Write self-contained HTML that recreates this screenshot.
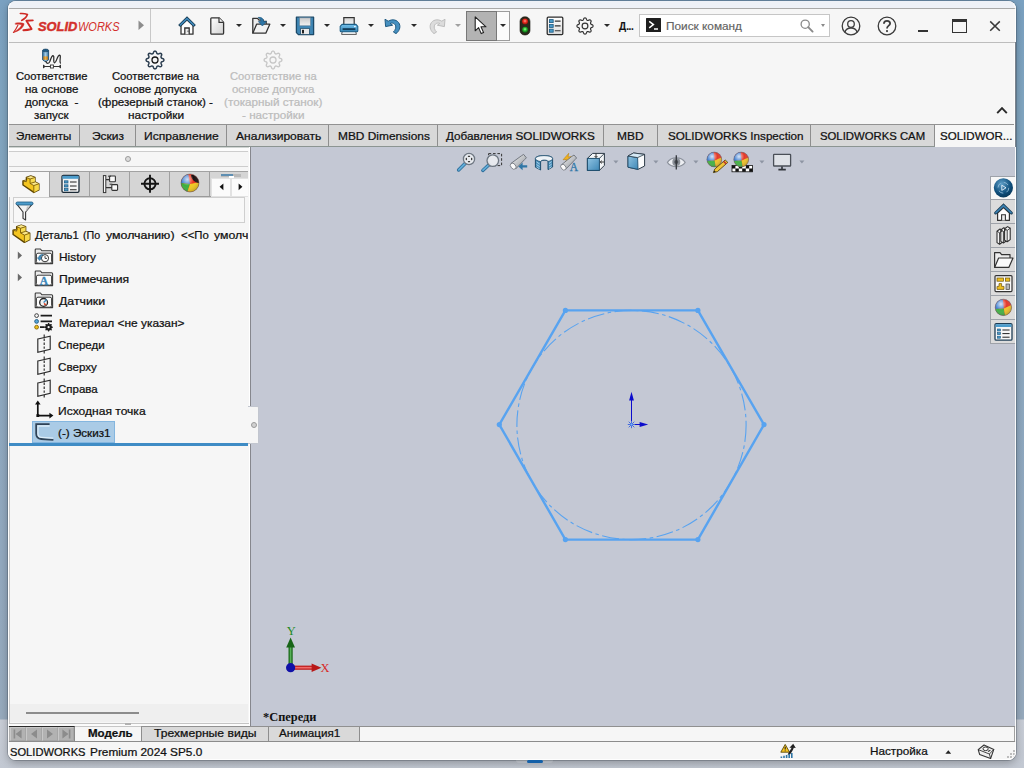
<!DOCTYPE html>
<html lang="ru">
<head>
<meta charset="utf-8">
<title>SOLIDWORKS Premium 2024 SP5.0</title>
<style>
*{box-sizing:border-box;margin:0;padding:0}
html,body{width:1024px;height:768px;overflow:hidden}
body{position:relative;font-family:"Liberation Sans",sans-serif;font-size:12px;color:#111;
 background:linear-gradient(180deg,#7aa1c1 0px,#80a5c0 100px,#8ca8c0 336px,#93a9bf 566px,#97aabd 719px,#c8cdd6 720px,#c2c8d2 768px);}
.abs{position:absolute}
#win{position:absolute;left:8px;top:1px;width:1008px;height:759px;background:#f6f6f6;border-radius:8px;overflow:hidden;
 box-shadow:0 0 0 1px rgba(40,50,60,.26),0 3px 9px rgba(0,0,0,.28)}
#rim{position:absolute;left:8px;top:1px;width:1008px;height:759px;border-radius:8px;border:1px solid rgba(255,255,255,.9);border-top-color:transparent;pointer-events:none}
/* everything inside #win is positioned relative to page coords via inner wrapper */
#in{position:absolute;left:-8px;top:-1px;width:1024px;height:768px}
.hl{position:absolute;height:1px;background:#b4b4b4}
.vl{position:absolute;width:1px;background:#b4b4b4}
.t{position:absolute;white-space:nowrap;line-height:14px;-webkit-text-stroke:.24px currentColor}
/* tabs */
.tab{position:absolute;top:125px;height:21px;background:#d9d9d9;border-right:1px solid #a8a8a8;font-size:12.5px;line-height:21px;white-space:nowrap;text-align:center;color:#111}
.tab.act{background:#f6f6f6;border-right:none}
/* ribbon */
.rb{position:absolute;top:69px;text-align:center;font-size:12px;line-height:13px;white-space:nowrap;color:#111}
.rb.dis{color:#b9b9b9}
/* tree */
.tr{position:absolute;left:58px;font-size:12.5px;line-height:16px;white-space:nowrap;color:#111}
.dd{position:absolute;width:0;height:0;border-left:3px solid transparent;border-right:3px solid transparent;border-top:3.4px solid #2a2a2a}
svg{position:absolute;overflow:visible}
</style>
</head>
<body>
<div id="win"><div id="in">

<!-- top resize strip + title bar -->
<div class="abs" style="left:8px;top:1px;width:1008px;height:7px;background:#eef1f7"></div>
<div class="hl" style="left:8px;top:8px;width:1008px;background:#a9a9a9"></div>
<div class="hl" style="left:8px;top:42px;width:1008px;background:#bdbdbd"></div>
<div class="vl" style="left:150px;top:9px;height:33px;background:#c8c8c8"></div>

<!-- ===== TITLE BAR ===== -->
<!-- DS logo mark -->
<svg style="left:10px;top:10px" width="26" height="26" viewBox="0 0 26 26" fill="none" stroke="#cf2a25" stroke-linecap="round" stroke-linejoin="round">
 <path d="M10.3 3.5 C13 3.3 15.6 3.7 17.5 4.5 C16.6 7 14.4 9.2 11.6 10.5" stroke-width="1.5"/>
 <path d="M5.6 13.1 C9 12.6 12.4 12.8 14.1 13.7 C13.6 17.6 9 21.2 3.4 22.5 C8 19.8 11 17 11.7 14.8 C9.8 14.2 7.6 14.2 5.6 14.3Z" fill="#cf2a25" stroke-width=".5"/>
 <path d="M3.4 22.5 C5 20.6 6.6 18 7.9 15.2" stroke-width="1.1"/>
 <path d="M22.8 10.4 L16.4 10.8 L21.6 19 C18.8 19.8 16 20.2 13.4 20.3" stroke-width="1.9"/>
</svg>
<div class="t" style="left:38.3px;top:19.5px;font-size:12.8px;line-height:14px;color:#d3302b;font-style:italic;font-weight:bold;-webkit-text-stroke:.45px #d3302b;display:inline-block;transform-origin:0 50%;transform:scaleX(1.0049)">SOLID</div>
<div class="t" style="left:78.2px;top:19.5px;font-size:12.8px;line-height:14px;color:#d3302b;font-style:italic;-webkit-text-stroke:0;display:inline-block;transform-origin:0 50%;transform:scaleX(0.8582)">WORKS</div>
<svg style="left:138px;top:20px" width="7" height="11"><path d="M0.5 0.5 L6 5.2 L0.5 10Z" fill="#8c8c8c"/></svg>

<!-- home -->
<svg style="left:177px;top:16px" width="20" height="20" viewBox="0 0 20 20">
 <path d="M4 9.6 V18.2 H16 V9.6 L10 3.8Z" fill="#fdfdfd" stroke="#333" stroke-width="1.3" stroke-linejoin="round"/>
 <path d="M7.8 18.2 V12 H12.2 V18.2" fill="#ececec" stroke="#333" stroke-width="1.3"/>
 <path d="M11 14.6 V15.8" stroke="#333" stroke-width="1"/>
 <path d="M2.2 10 L10 2.4 L17.8 10" fill="none" stroke="#1d3f57" stroke-width="3" stroke-linejoin="miter" stroke-linecap="butt"/>
 <path d="M2.9 9.4 L10 2.5 L17.1 9.4" fill="none" stroke="#3f8abc" stroke-width="1.5" stroke-linejoin="miter" stroke-linecap="butt"/>
</svg>
<!-- new -->
<svg style="left:210px;top:17px" width="15" height="18" viewBox="0 0 15 18">
 <defs><linearGradient id="gdoc" x1="0" y1="0" x2="1" y2="1"><stop offset="0" stop-color="#ffffff"/><stop offset="1" stop-color="#d2d2d2"/></linearGradient></defs>
 <path d="M1.6 0.8 H9 L13.6 5.4 V16 Q13.6 17.2 12.4 17.2 H1.6 Q0.8 17.2 0.8 16 V1.8 Q0.8 0.8 1.6 0.8Z" fill="url(#gdoc)" stroke="#333" stroke-width="1.3" stroke-linejoin="round"/>
 <path d="M9 0.8 V5.4 H13.6" fill="#f4f4f4" stroke="#333" stroke-width="1.2" stroke-linejoin="round"/>
</svg>
<div class="dd" style="left:235.5px;top:24px"></div>
<!-- open -->
<svg style="left:251px;top:16px" width="20" height="19" viewBox="0 0 20 19">
 <path d="M1.8 17.2 V2.4 H6.6 L8.2 4.2 H13" fill="#ededed" stroke="#333" stroke-width="1.3" stroke-linejoin="round"/>
 <path d="M1.8 17.2 L5.6 8.2 H18.8 L14.8 17.2Z" fill="#f2f2f2" stroke="#333" stroke-width="1.3" stroke-linejoin="round"/>
 <path d="M15.2 8 V5.4 H12.2" fill="none" stroke="#333" stroke-width="1.2"/>
 <path d="M7.2 1.4 C10.6 1 12.4 2.6 12.6 5.6 L15.4 5.6 L11.4 10 L7.4 5.6 L10 5.6 C9.8 3.6 9 2.4 7.2 1.4Z" fill="#2f76a6" stroke="#1f5a82" stroke-width=".7"/>
</svg>
<div class="dd" style="left:279.5px;top:24px"></div>
<!-- save -->
<svg style="left:295px;top:16px" width="20" height="20" viewBox="0 0 20 20">
 <defs><linearGradient id="gsv" x1="0" y1="0" x2="0" y2="1"><stop offset="0" stop-color="#c9c9c9"/><stop offset="1" stop-color="#f2f2f2"/></linearGradient></defs>
 <path d="M1.4 1.2 H18.6 V18.6 H3.4 L1.4 16.6Z" fill="#3f86b4" stroke="#1c4a69" stroke-width="1.3" stroke-linejoin="round"/>
 <rect x="4.4" y="1.8" width="11.2" height="8" fill="url(#gsv)" stroke="#5c7e96" stroke-width=".6"/>
 <rect x="5.6" y="12.4" width="8.8" height="6" fill="#e9e9e9" stroke="#28536f" stroke-width=".8"/>
 <rect x="7" y="13.8" width="2" height="3.6" fill="#222"/>
</svg>
<div class="dd" style="left:323.6px;top:24px"></div>
<!-- print -->
<svg style="left:339px;top:16px" width="20" height="20" viewBox="0 0 20 20">
 <defs><linearGradient id="gpr" x1="0" y1="0" x2="0" y2="1"><stop offset="0" stop-color="#d2d2d2"/><stop offset="1" stop-color="#fafafa"/></linearGradient>
 <linearGradient id="gpb" x1="0" y1="0" x2="0" y2="1"><stop offset="0" stop-color="#74c0ea"/><stop offset="1" stop-color="#3586b8"/></linearGradient></defs>
 <rect x="4.8" y="1.6" width="10.4" height="7.6" fill="url(#gpr)" stroke="#333" stroke-width="1.2"/>
 <path d="M3.4 15 H16.6 L17.4 18.4 H2.6Z" fill="#fbfbfb" stroke="#555" stroke-width="1" stroke-linejoin="round"/>
 <path d="M3 8.4 H17 L18.8 10.4 V14.8 Q18.8 15.8 17.8 15.8 H2.2 Q1.2 15.8 1.2 14.8 V10.4Z" fill="url(#gpb)" stroke="#1d5f87" stroke-width="1.1" stroke-linejoin="round"/>
 <rect x="3.6" y="12.2" width="12.8" height="1.9" fill="#123c58"/>
 <rect x="15" y="10" width="1.8" height="1.1" fill="#e8f4ff"/>
</svg>
<div class="dd" style="left:367.5px;top:24px"></div>
<!-- undo -->
<svg style="left:384px;top:17px" width="18" height="18" viewBox="0 0 18 18">
 <path d="M1 2.2 L1.6 9.6 L8.6 8.2 L6.2 6.4 C9.6 5.2 12.6 7.6 11.6 11.4 C11.2 13 10.4 14.2 9.4 15 L12 16.6 C15 14.4 16.8 10.6 15.4 7 C13.6 2.8 8.6 1.6 4.2 4.2Z" fill="#4690c0" stroke="#1f5a82" stroke-width="1" stroke-linejoin="round"/>
</svg>
<div class="dd" style="left:411.4px;top:24px"></div>
<!-- redo (disabled) -->
<svg style="left:428px;top:17px" width="18" height="18" viewBox="0 0 18 18">
 <path d="M17 2.2 L16.4 9.6 L9.4 8.2 L11.8 6.4 C8.4 5.2 5.4 7.6 6.4 11.4 C6.8 13 7.6 14.2 8.6 15 L6 16.6 C3 14.4 1.2 10.6 2.6 7 C4.4 2.8 9.4 1.6 13.8 4.2Z" fill="#dcdcdc" stroke="#bdbdbd" stroke-width="1" stroke-linejoin="round"/>
</svg>
<div class="dd" style="left:455.3px;top:24px;border-top-color:#a0a0a0"></div>
<!-- select button -->
<div class="abs" style="left:466px;top:11px;width:44px;height:30px;background:#fbfbfb;border:1px solid #9c9c9c"></div>
<div class="abs" style="left:466px;top:11px;width:31px;height:30px;background:#b3b3b3;border:1px solid #787878"></div>
<svg style="left:474px;top:16px" width="14" height="19" viewBox="0 0 14 19">
 <path d="M1.2 0.9 V14.8 L4.6 11.6 L7.2 17.6 L9.6 16.6 L7 10.8 H12Z" fill="#fff" stroke="#222" stroke-width="1.1" stroke-linejoin="round"/>
</svg>
<div class="dd" style="left:499.5px;top:24px"></div>
<!-- traffic light -->
<svg style="left:519px;top:16px" width="12" height="20" viewBox="0 0 12 20">
 <defs><radialGradient id="gr1" cx=".5" cy=".4" r=".6"><stop offset="0" stop-color="#ff9a8a"/><stop offset=".5" stop-color="#e8281c"/><stop offset="1" stop-color="#8c120a"/></radialGradient>
 <radialGradient id="gg1" cx=".5" cy=".4" r=".6"><stop offset="0" stop-color="#9dff9a"/><stop offset=".5" stop-color="#22b02a"/><stop offset="1" stop-color="#0b5a12"/></radialGradient></defs>
 <rect x="1" y="0.8" width="10" height="18.2" rx="4.6" fill="#2b2a1c" stroke="#1a1a10" stroke-width=".6"/>
 <circle cx="6" cy="5.6" r="3" fill="url(#gr1)"/>
 <circle cx="6" cy="13.8" r="3" fill="url(#gg1)"/>
</svg>
<!-- options list -->
<svg style="left:546px;top:16px" width="18" height="20" viewBox="0 0 18 20">
 <defs><linearGradient id="gol" x1="0" y1="0" x2="0" y2="1"><stop offset="0" stop-color="#ffffff"/><stop offset="1" stop-color="#dcdcdc"/></linearGradient></defs>
 <rect x="1.2" y="1.2" width="15.6" height="17.4" rx="1" fill="url(#gol)" stroke="#2d2d2d" stroke-width="1.3"/>
 <g fill="#4a9ac8" stroke="#1d5a82" stroke-width=".8"><rect x="3.4" y="3.6" width="3.8" height="3"/><rect x="3.4" y="8.4" width="3.8" height="3"/><rect x="3.4" y="13.2" width="3.8" height="3"/></g>
 <g stroke="#333" stroke-width="1.1"><path d="M8.8 5.1 H14.6 M8.8 9.9 H14.6 M8.8 14.7 H14.6"/></g>
</svg>
<!-- gear -->
<svg style="left:585px;top:25.6px" width="1" height="1"><path d="M0.00 -8.10 L0.52 -8.01 L1.02 -7.72 L1.39 -6.96 L1.66 -6.20 L1.99 -5.85 L2.33 -5.64 L2.73 -5.54 L3.21 -5.56 L3.94 -5.90 L4.74 -6.17 L5.29 -6.03 L5.73 -5.73 L6.03 -5.29 L6.17 -4.74 L5.90 -3.94 L5.56 -3.21 L5.54 -2.73 L5.64 -2.33 L5.85 -1.99 L6.20 -1.66 L6.96 -1.39 L7.72 -1.02 L8.01 -0.52 L8.10 0.00 L8.01 0.52 L7.72 1.02 L6.96 1.39 L6.20 1.66 L5.85 1.99 L5.64 2.33 L5.54 2.73 L5.56 3.21 L5.90 3.94 L6.17 4.74 L6.03 5.29 L5.73 5.73 L5.29 6.03 L4.74 6.17 L3.94 5.90 L3.21 5.56 L2.73 5.54 L2.33 5.64 L1.99 5.85 L1.66 6.20 L1.39 6.96 L1.02 7.72 L0.52 8.01 L0.00 8.10 L-0.52 8.01 L-1.02 7.72 L-1.39 6.96 L-1.66 6.20 L-1.99 5.85 L-2.33 5.64 L-2.73 5.54 L-3.21 5.56 L-3.94 5.90 L-4.74 6.17 L-5.29 6.03 L-5.73 5.73 L-6.03 5.29 L-6.17 4.74 L-5.90 3.94 L-5.56 3.21 L-5.54 2.73 L-5.64 2.33 L-5.85 1.99 L-6.20 1.66 L-6.96 1.39 L-7.72 1.02 L-8.01 0.52 L-8.10 0.00 L-8.01 -0.52 L-7.72 -1.02 L-6.96 -1.39 L-6.20 -1.66 L-5.85 -1.99 L-5.64 -2.33 L-5.54 -2.73 L-5.56 -3.21 L-5.90 -3.94 L-6.17 -4.74 L-6.03 -5.29 L-5.73 -5.73 L-5.29 -6.03 L-4.74 -6.17 L-3.94 -5.90 L-3.21 -5.56 L-2.73 -5.54 L-2.33 -5.64 L-1.99 -5.85 L-1.66 -6.20 L-1.39 -6.96 L-1.02 -7.72 L-0.52 -8.01Z" fill="none" stroke="#333" stroke-width="1.15" stroke-linejoin="round"/><circle r="2.9" fill="none" stroke="#333" stroke-width="1.15"/></svg>
<div class="dd" style="left:603.5px;top:24px"></div>
<div class="t" style="left:619.2px;top:18.6px;font-size:10.4px;font-weight:bold;line-height:15px;color:#111;-webkit-text-stroke:.1px #111;display:inline-block;transform-origin:0 50%;transform:scaleX(0.9623)">Д<span style="letter-spacing:-.3px">...</span></div>

<!-- search box -->
<div class="abs" style="left:639px;top:14px;width:191px;height:23px;background:#fff;border:1px solid #c6c6c6"></div>
<svg style="left:646px;top:18px" width="15" height="14" viewBox="0 0 15 14"><rect width="15" height="14" rx=".6" fill="#1e1e1e"/><path d="M3.2 3.4 L7.4 6.6 L3.2 9.8" fill="none" stroke="#fff" stroke-width="1.5"/><path d="M8 11 H12" stroke="#fff" stroke-width="1.4"/></svg>
<div class="t" style="left:666px;top:18.6px;font-size:10.5px;line-height:15px;color:#636363;-webkit-text-stroke:.15px #636363;display:inline-block;transform-origin:0 50%;transform:scaleX(1.1249)">Поиск команд</div>
<svg style="left:800px;top:19px" width="14" height="14" viewBox="0 0 14 14"><circle cx="5.2" cy="5.2" r="4.1" fill="none" stroke="#8a8a8a" stroke-width="1.3"/><path d="M8.2 8.2 L12.6 12.6" stroke="#8a8a8a" stroke-width="1.9" stroke-linecap="round"/></svg>
<div class="dd" style="left:821px;top:24px;border-left-width:2.5px;border-right-width:2.5px;border-top-width:3px;border-top-color:#8a8a8a"></div>
<!-- user -->
<svg style="left:841px;top:16px" width="20" height="20" viewBox="0 0 20 20" fill="none" stroke="#3c3c3c" stroke-width="1.3">
 <circle cx="10" cy="10" r="8.8"/><circle cx="10" cy="8" r="3.3"/><path d="M4 16.2 C4.8 12.6 7.4 12 10 12 C12.6 12 15.2 12.6 16 16.2"/>
</svg>
<!-- help -->
<svg style="left:877px;top:16px" width="20" height="20" viewBox="0 0 20 20" fill="none" stroke="#3c3c3c">
 <circle cx="10" cy="10" r="8.8" stroke-width="1.3"/>
 <path d="M6.9 7.8 C6.9 5.6 8.4 4.8 10 4.8 C11.8 4.8 13.1 5.8 13.1 7.5 C13.1 9.6 10 9.8 10 12.4" stroke-width="1.8"/><circle cx="10" cy="15.1" r="1.1" fill="#3c3c3c" stroke="none"/>
</svg>
<!-- window buttons -->
<div class="abs" style="left:918px;top:30px;width:10px;height:2px;background:#333"></div>
<div class="abs" style="left:952px;top:19px;width:15px;height:14px;border:1.4px solid #333;border-top-width:3px"></div>
<svg style="left:989px;top:20px" width="12" height="12" viewBox="0 0 12 12"><path d="M1.2 1.4 L10.8 10.8 M10.8 1.4 L1.2 10.8" stroke="#3a3a3a" stroke-width="1.5"/></svg>
<!-- ===== RIBBON ===== -->
<svg style="left:40px;top:47px" width="24" height="24" viewBox="0 0 24 24">
 <defs><linearGradient id="gcy" x1="0" y1="0" x2="1" y2="0"><stop offset="0" stop-color="#2f6f9c"/><stop offset=".5" stop-color="#a6cde6"/><stop offset="1" stop-color="#2f6f9c"/></linearGradient>
 <linearGradient id="gcy2" x1="0" y1="0" x2="1" y2="0"><stop offset="0" stop-color="#b87512"/><stop offset=".5" stop-color="#efb04a"/><stop offset="1" stop-color="#b87512"/></linearGradient></defs>
 <path d="M2.6 3.6 V12.8 L4.8 14.4 H6.4 L8.6 12.8 V3.6Z" fill="url(#gcy)" stroke="#1d4f74" stroke-width=".9"/>
 <rect x="3.3" y="9.4" width="4.6" height="3.4" fill="url(#gcy2)"/>
 <ellipse cx="5.6" cy="3.4" rx="3" ry="1.4" fill="#1f5a85" stroke="#173f5c" stroke-width=".6"/>
 <path d="M5.8 14.4 C6.4 17 9 16.8 9.8 14.6 C10.8 12 11.4 8.8 13 8.6 C14.8 8.6 12.8 15.2 14.4 15.8 C16.2 16.2 17.2 8.8 19.4 8.2 C21.6 8 19 14.8 20.4 16" fill="none" stroke="#2b2b2b" stroke-width="1.25" stroke-linecap="round"/>
 <path d="M4.4 19.5 H19.6" stroke="#333" stroke-width="1.1"/>
 <path d="M3 17.4 L6 19.5 L3 21.6Z M21 17.4 L18 19.5 L21 21.6Z" fill="#333"/>
 <rect x="10.4" y="18" width="3" height="3" fill="#fff" stroke="#333" stroke-width=".9"/>
</svg>
<div class="t" style="left:16.2px;top:69px;font-size:11.3px;color:#111;display:inline-block;transform-origin:0 50%;transform:scaleX(0.9930)">Соответствие</div>
<div class="t" style="left:25.4px;top:82px;font-size:11.3px;color:#111;display:inline-block;transform-origin:0 50%;transform:scaleX(1.0214)">на основе</div>
<div class="t" style="left:24.8px;top:95px;font-size:11.3px;color:#111;display:inline-block;transform-origin:0 50%;transform:scaleX(1.0351)">допуска &nbsp;-</div>
<div class="t" style="left:34.3px;top:108px;font-size:11.3px;color:#111;display:inline-block;transform-origin:0 50%;transform:scaleX(1.0266)">запуск</div>
<svg style="left:155.4px;top:59.9px" width="1" height="1"><path d="M0.00 -8.90 L0.58 -8.79 L1.11 -8.46 L1.51 -7.60 L1.80 -6.73 L2.15 -6.33 L2.53 -6.10 L2.96 -6.00 L3.48 -6.03 L4.31 -6.44 L5.20 -6.77 L5.81 -6.63 L6.29 -6.29 L6.63 -5.81 L6.77 -5.20 L6.44 -4.31 L6.03 -3.48 L6.00 -2.96 L6.10 -2.53 L6.33 -2.15 L6.73 -1.80 L7.60 -1.51 L8.46 -1.11 L8.79 -0.58 L8.90 0.00 L8.79 0.58 L8.46 1.11 L7.60 1.51 L6.73 1.80 L6.33 2.15 L6.10 2.53 L6.00 2.96 L6.03 3.48 L6.44 4.31 L6.77 5.20 L6.63 5.81 L6.29 6.29 L5.81 6.63 L5.20 6.77 L4.31 6.44 L3.48 6.03 L2.96 6.00 L2.53 6.10 L2.15 6.33 L1.80 6.73 L1.51 7.60 L1.11 8.46 L0.58 8.79 L0.00 8.90 L-0.58 8.79 L-1.11 8.46 L-1.51 7.60 L-1.80 6.73 L-2.15 6.33 L-2.53 6.10 L-2.96 6.00 L-3.48 6.03 L-4.31 6.44 L-5.20 6.77 L-5.81 6.63 L-6.29 6.29 L-6.63 5.81 L-6.77 5.20 L-6.44 4.31 L-6.03 3.48 L-6.00 2.96 L-6.10 2.53 L-6.33 2.15 L-6.73 1.80 L-7.60 1.51 L-8.46 1.11 L-8.79 0.58 L-8.90 0.00 L-8.79 -0.58 L-8.46 -1.11 L-7.60 -1.51 L-6.73 -1.80 L-6.33 -2.15 L-6.10 -2.53 L-6.00 -2.96 L-6.03 -3.48 L-6.44 -4.31 L-6.77 -5.20 L-6.63 -5.81 L-6.29 -6.29 L-5.81 -6.63 L-5.20 -6.77 L-4.31 -6.44 L-3.48 -6.03 L-2.96 -6.00 L-2.53 -6.10 L-2.15 -6.33 L-1.80 -6.73 L-1.51 -7.60 L-1.11 -8.46 L-0.58 -8.79Z" fill="none" stroke="#2c3e50" stroke-width="1.45" stroke-linejoin="round"/><circle r="3.0" fill="none" stroke="#151515" stroke-width="1.3"/></svg>
<div class="t" style="left:111.6px;top:69px;font-size:11.3px;color:#111;display:inline-block;transform-origin:0 50%;transform:scaleX(0.9947)">Соответствие на</div>
<div class="t" style="left:113.6px;top:82px;font-size:11.3px;color:#111;display:inline-block;transform-origin:0 50%;transform:scaleX(1.0161)">основе допуска</div>
<div class="t" style="left:98.2px;top:95px;font-size:11.3px;color:#111;display:inline-block;transform-origin:0 50%;transform:scaleX(1.0268)">(фрезерный станок) -</div>
<div class="t" style="left:127.6px;top:108px;font-size:11.3px;color:#111;display:inline-block;transform-origin:0 50%;transform:scaleX(1.0508)">настройки</div>
<svg style="left:273.2px;top:59.9px" width="1" height="1"><path d="M0.00 -8.90 L0.58 -8.79 L1.11 -8.46 L1.51 -7.60 L1.80 -6.73 L2.15 -6.33 L2.53 -6.10 L2.96 -6.00 L3.48 -6.03 L4.31 -6.44 L5.20 -6.77 L5.81 -6.63 L6.29 -6.29 L6.63 -5.81 L6.77 -5.20 L6.44 -4.31 L6.03 -3.48 L6.00 -2.96 L6.10 -2.53 L6.33 -2.15 L6.73 -1.80 L7.60 -1.51 L8.46 -1.11 L8.79 -0.58 L8.90 0.00 L8.79 0.58 L8.46 1.11 L7.60 1.51 L6.73 1.80 L6.33 2.15 L6.10 2.53 L6.00 2.96 L6.03 3.48 L6.44 4.31 L6.77 5.20 L6.63 5.81 L6.29 6.29 L5.81 6.63 L5.20 6.77 L4.31 6.44 L3.48 6.03 L2.96 6.00 L2.53 6.10 L2.15 6.33 L1.80 6.73 L1.51 7.60 L1.11 8.46 L0.58 8.79 L0.00 8.90 L-0.58 8.79 L-1.11 8.46 L-1.51 7.60 L-1.80 6.73 L-2.15 6.33 L-2.53 6.10 L-2.96 6.00 L-3.48 6.03 L-4.31 6.44 L-5.20 6.77 L-5.81 6.63 L-6.29 6.29 L-6.63 5.81 L-6.77 5.20 L-6.44 4.31 L-6.03 3.48 L-6.00 2.96 L-6.10 2.53 L-6.33 2.15 L-6.73 1.80 L-7.60 1.51 L-8.46 1.11 L-8.79 0.58 L-8.90 0.00 L-8.79 -0.58 L-8.46 -1.11 L-7.60 -1.51 L-6.73 -1.80 L-6.33 -2.15 L-6.10 -2.53 L-6.00 -2.96 L-6.03 -3.48 L-6.44 -4.31 L-6.77 -5.20 L-6.63 -5.81 L-6.29 -6.29 L-5.81 -6.63 L-5.20 -6.77 L-4.31 -6.44 L-3.48 -6.03 L-2.96 -6.00 L-2.53 -6.10 L-2.15 -6.33 L-1.80 -6.73 L-1.51 -7.60 L-1.11 -8.46 L-0.58 -8.79Z" fill="none" stroke="#c6c6c6" stroke-width="1.3" stroke-linejoin="round"/><circle r="3.0" fill="none" stroke="#c6c6c6" stroke-width="1.3"/></svg>
<div class="t" style="left:229.5px;top:69px;font-size:11.3px;color:#bcbcbc;display:inline-block;transform-origin:0 50%;transform:scaleX(0.9901)">Соответствие на</div>
<div class="t" style="left:231.8px;top:82px;font-size:11.3px;color:#bcbcbc;display:inline-block;transform-origin:0 50%;transform:scaleX(1.0136)">основе допуска</div>
<div class="t" style="left:223.6px;top:95px;font-size:11.3px;color:#bcbcbc;display:inline-block;transform-origin:0 50%;transform:scaleX(1.0372)">(токарный станок)</div>
<div class="t" style="left:242.0px;top:108px;font-size:11.3px;color:#bcbcbc;display:inline-block;transform-origin:0 50%;transform:scaleX(1.0352)">- настройки</div>
<svg style="left:996px;top:106px" width="12" height="9" viewBox="0 0 12 9"><path d="M1.2 7.2 L6 2.2 L10.8 7.2" fill="none" stroke="#2a2a2a" stroke-width="1.9"/></svg>
<!-- ===== TABS ===== -->
<div class="abs" style="left:8px;top:124px;width:1008px;height:23px;background:#d8d8d8;border-top:1px solid #929292;border-bottom:1px solid #8c9592"></div>
<div class="abs" style="left:935px;top:125px;width:81px;height:22px;background:#f6f6f6"></div>
<div class="vl" style="left:79px;top:125px;height:21px;background:#8e8e8e"></div>
<div class="vl" style="left:135px;top:125px;height:21px;background:#8e8e8e"></div>
<div class="vl" style="left:226px;top:125px;height:21px;background:#8e8e8e"></div>
<div class="vl" style="left:328px;top:125px;height:21px;background:#8e8e8e"></div>
<div class="vl" style="left:437px;top:125px;height:21px;background:#8e8e8e"></div>
<div class="vl" style="left:603px;top:125px;height:21px;background:#8e8e8e"></div>
<div class="vl" style="left:657px;top:125px;height:21px;background:#8e8e8e"></div>
<div class="vl" style="left:810px;top:125px;height:21px;background:#8e8e8e"></div>
<div class="vl" style="left:934px;top:125px;height:21px;background:#8e8e8e"></div>
<div class="t" style="left:16.0px;top:129px;font-size:11.3px;line-height:15px;color:#111;display:inline-block;transform-origin:0 50%;transform:scaleX(1.0202)">Элементы</div>
<div class="t" style="left:92.0px;top:129px;font-size:11.3px;line-height:15px;color:#111;display:inline-block;transform-origin:0 50%;transform:scaleX(1.0595)">Эскиз</div>
<div class="t" style="left:144.2px;top:129px;font-size:11.3px;line-height:15px;color:#111;display:inline-block;transform-origin:0 50%;transform:scaleX(1.0700)">Исправление</div>
<div class="t" style="left:235.7px;top:129px;font-size:11.3px;line-height:15px;color:#111;display:inline-block;transform-origin:0 50%;transform:scaleX(1.0665)">Анализировать</div>
<div class="t" style="left:337.8px;top:129px;font-size:11.3px;line-height:15px;color:#111;display:inline-block;transform-origin:0 50%;transform:scaleX(1.0531)">MBD Dimensions</div>
<div class="t" style="left:445.7px;top:129px;font-size:11.3px;line-height:15px;color:#111;display:inline-block;transform-origin:0 50%;transform:scaleX(1.0372)">Добавления SOLIDWORKS</div>
<div class="t" style="left:617.4px;top:129px;font-size:11.3px;line-height:15px;color:#111;display:inline-block;transform-origin:0 50%;transform:scaleX(1.0594)">MBD</div>
<div class="t" style="left:667.5px;top:129px;font-size:11.3px;line-height:15px;color:#111;display:inline-block;transform-origin:0 50%;transform:scaleX(1.0326)">SOLIDWORKS Inspection</div>
<div class="t" style="left:819.5px;top:129px;font-size:11.3px;line-height:15px;color:#111;display:inline-block;transform-origin:0 50%;transform:scaleX(1.0026)">SOLIDWORKS CAM</div>
<div class="t" style="left:939.5px;top:129px;font-size:11.3px;line-height:15px;color:#111;display:inline-block;transform-origin:0 50%;transform:scaleX(1.0220)">SOLIDWOR...</div>
<!-- ===== LEFT PANEL ===== -->
<div class="abs" style="left:8px;top:147px;width:241px;height:4px;background:#fcfcfc"></div>
<div class="hl" style="left:8px;top:147px;width:1008px;background:#cfd4d2"></div>
<div class="hl" style="left:8px;top:151px;width:240px;background:#cdcdcd"></div>
<div class="hl" style="left:8px;top:166px;width:240px;background:#cdcdcd"></div>
<div class="abs" style="left:125px;top:156px;width:6px;height:6px;border-radius:50%;background:#dcdcdc;border:1px solid #9c9c9c"></div>
<!-- fm tabs -->
<div class="abs" style="left:10px;top:171px;width:238px;height:26px;background:#d5d5d5;border-top:1px solid #a2a2a2;border-bottom:1px solid #9a9a9a"></div>
<div class="abs" style="left:10px;top:172px;width:39px;height:25px;background:#f6f6f6"></div>
<div class="vl" style="left:49px;top:172px;height:24px;background:#a0a0a0"></div>
<div class="vl" style="left:89px;top:172px;height:24px;background:#a0a0a0"></div>
<div class="vl" style="left:129px;top:172px;height:24px;background:#a0a0a0"></div>
<div class="vl" style="left:169px;top:172px;height:24px;background:#a0a0a0"></div>
<div class="vl" style="left:209px;top:172px;height:24px;background:#a0a0a0"></div>
<!-- partial 6th tab icon -->
<div class="abs" style="left:221px;top:174px;width:20px;height:3px;background:#b9b9b9"></div>
<div class="abs" style="left:221px;top:174px;width:12px;height:2px;background:#5f8fb2"></div>
<div class="abs" style="left:229px;top:176px;width:5px;height:2px;background:#fff"></div>
<!-- scroll buttons -->
<div class="abs" style="left:211px;top:178px;width:20px;height:19px;background:#fbfbfb;border:1px solid #e2e2e2"></div>
<div class="abs" style="left:231px;top:178px;width:17px;height:19px;background:#fbfbfb;border:1px solid #e2e2e2;border-right:none"></div>
<svg style="left:219px;top:183px" width="5" height="8"><path d="M4.4 0.4 V7.2 L0.6 3.8Z" fill="#111"/></svg>
<svg style="left:238px;top:183px" width="5" height="8"><path d="M0.6 0.4 V7.2 L4.4 3.8Z" fill="#111"/></svg>

<!-- part icon (tab) -->
<svg style="left:19.7px;top:172.7px" width="23" height="23" viewBox="0 0 24 24" stroke-linejoin="round">
 <path d="M3.1 12.5 L14.4 20.3 L19.7 17.5 V11.25 L15.6 9.4 V4.7 L11.25 3.1 L6.7 4.7 V7.5 L3.1 8.3Z" fill="#f4c520" stroke="#5e4604" stroke-width="1.5"/>
 <path d="M6.7 4.7 L10.5 6.25 L15.6 4.7 L11.25 3.1Z" fill="#fbe88c"/>
 <path d="M10.5 6.25 L15.6 4.7 V9.4 L10.5 10.9Z" fill="#f8dc52"/>
 <path d="M10.5 10.9 L14.4 13.1 L19.7 11.25 L15.6 9.4Z" fill="#fbe88c"/>
 <path d="M14.4 13.1 L19.7 11.25 V17.5 L14.4 20.3Z" fill="#f7d848"/>
 <path d="M3.1 8.3 L6.7 9.1 V7.5Z" fill="#fbe88c"/>
 <path d="M6.7 4.7 L10.5 6.25 L15.6 4.7 M10.5 6.25 V10.9 L14.4 13.1 L19.7 11.25 M14.4 13.1 V20.3 M10.5 10.9 L15.6 9.4 M3.1 8.3 L6.7 9.1 V7.5" fill="none" stroke="#7a5c06" stroke-width=".9"/>
</svg>
<!-- property manager icon -->
<svg style="left:61px;top:174px" width="19" height="20" viewBox="0 0 19 20">
 <rect x="1" y="1.4" width="17" height="17" rx="1.4" fill="#f4f4f4" stroke="#1c2a36" stroke-width="1.3"/>
 <rect x="1.4" y="1.8" width="16.2" height="3" fill="#4c9ccb"/>
 <g fill="#4a98c6" stroke="#1d5a82" stroke-width=".7"><rect x="3.4" y="6.8" width="3.6" height="2.2"/><rect x="3.4" y="10.8" width="3.6" height="2.2"/><rect x="3.4" y="14.6" width="3.6" height="2.2"/></g>
 <path d="M9 8 H15.6 M9 12 H15.6 M9 15.8 H15.6" stroke="#222" stroke-width="1.1"/>
</svg>
<!-- config manager icon -->
<svg style="left:102px;top:174px" width="17" height="20" viewBox="0 0 17 20">
 <rect x="1.4" y="1.6" width="2.4" height="17" fill="#fafafa" stroke="#333" stroke-width="1"/>
 <path d="M4 5.6 H8 M4 13.6 H10" stroke="#333" stroke-width="1.2"/>
 <rect x="7.6" y="2" width="5.8" height="5.8" rx=".8" fill="#fafafa" stroke="#333" stroke-width="1.1"/>
 <rect x="9.8" y="10.6" width="5.8" height="5.8" rx=".8" fill="#fafafa" stroke="#333" stroke-width="1.1"/>
 <path d="M6 2.2 H9 M7.6 10.2 H10.4" stroke="#333" stroke-width="1"/>
</svg>
<!-- dimxpert crosshair -->
<svg style="left:140px;top:174px" width="20" height="20" viewBox="0 0 20 20" fill="none" stroke="#151515">
 <circle cx="10" cy="9.8" r="5.6" stroke-width="1.9"/><path d="M10 0.8 V18.8 M1 9.8 H19" stroke-width="1.9"/>
</svg>
<!-- display manager ball -->
<svg style="left:180px;top:173px" width="20" height="20" viewBox="0 0 20 20">
 <defs><radialGradient id="gb1" cx=".35" cy=".3" r=".8"><stop offset="0" stop-color="#fff" stop-opacity=".75"/><stop offset=".45" stop-color="#fff" stop-opacity="0"/><stop offset="1" stop-color="#000" stop-opacity=".25"/></radialGradient><clipPath id="cb1"><circle cx="10" cy="10" r="9"/></clipPath></defs>
 <g clip-path="url(#cb1)"><rect width="20" height="20" fill="#e8321e"/><path d="M0 0 H8 L10 11 L0 10Z" fill="#3a7bd0"/><path d="M0 10 L10 11 L7 20 H0Z" fill="#3cae3c"/><path d="M10 11 L20 9 V20 H7Z" fill="#f2c81e"/><path d="M11 2 C15 1 19 5 19 10 C15 10 11 6 11 2Z" fill="#1a1010"/></g>
 <circle cx="10" cy="10" r="9" fill="url(#gb1)" stroke="#555" stroke-width=".5"/>
</svg>

<!-- filter box -->
<div class="abs" style="left:13px;top:197px;width:232px;height:26px;background:#f8f8f8;border:1px solid #cfcfcf"></div>
<svg style="left:15px;top:201px" width="19" height="20" viewBox="0 0 19 20">
 <path d="M1.4 2.6 L8 11 V17.4 L10.6 19 V11 L17.6 2.6Z" fill="#f2f2f2" stroke="#333" stroke-width="1.1" stroke-linejoin="round"/>
 <path d="M10.6 11 L15 5.6 L12 5.6Z" fill="#bdbdbd"/>
 <rect x="1" y="1" width="17" height="3" rx="1.4" fill="#4c9ccb" stroke="#1f5a82" stroke-width=".8"/>
</svg>
<div class="vl" style="left:9px;top:197px;height:526px;background:#c9c9c9"></div>

<!-- tree root -->
<svg style="left:10.0px;top:222.0px" width="24" height="24" viewBox="0 0 24 24" stroke-linejoin="round">
 <path d="M3.1 12.5 L14.4 20.3 L19.7 17.5 V11.25 L15.6 9.4 V4.7 L11.25 3.1 L6.7 4.7 V7.5 L3.1 8.3Z" fill="#f4c520" stroke="#5e4604" stroke-width="1.5"/>
 <path d="M6.7 4.7 L10.5 6.25 L15.6 4.7 L11.25 3.1Z" fill="#fbe88c"/>
 <path d="M10.5 6.25 L15.6 4.7 V9.4 L10.5 10.9Z" fill="#f8dc52"/>
 <path d="M10.5 10.9 L14.4 13.1 L19.7 11.25 L15.6 9.4Z" fill="#fbe88c"/>
 <path d="M14.4 13.1 L19.7 11.25 V17.5 L14.4 20.3Z" fill="#f7d848"/>
 <path d="M3.1 8.3 L6.7 9.1 V7.5Z" fill="#fbe88c"/>
 <path d="M6.7 4.7 L10.5 6.25 L15.6 4.7 M10.5 6.25 V10.9 L14.4 13.1 L19.7 11.25 M14.4 13.1 V20.3 M10.5 10.9 L15.6 9.4 M3.1 8.3 L6.7 9.1 V7.5" fill="none" stroke="#7a5c06" stroke-width=".9"/>
</svg>
<div class="abs" style="left:34px;top:226px;width:214px;height:18px;overflow:hidden"><div class="t" style="left:0;top:1px;font-size:11.3px;line-height:16px"><span style="position:absolute;left:0.8px;top:0;display:inline-block;transform-origin:0 50%;transform:scaleX(1.0033)">Деталь1</span> <span style="position:absolute;left:49.2px;top:0;display:inline-block;transform-origin:0 50%;transform:scaleX(0.9465)">(По</span> <span style="position:absolute;left:71.9px;top:0;display:inline-block;transform-origin:0 50%;transform:scaleX(1.0938)">умолчанию)</span> <span style="position:absolute;left:146.5px;top:0;display:inline-block;transform-origin:0 50%;transform:scaleX(1.0069)">&lt;&lt;По</span> <span style="position:absolute;left:179.8px;top:0;display:inline-block;transform-origin:0 50%;transform:scaleX(1.0867)">умолч</span></div></div>

<!-- expand arrows -->
<svg style="left:17px;top:251px" width="6" height="9"><path d="M0.8 0.6 L5 4.4 L0.8 8.2Z" fill="#6a6a6a"/></svg>
<svg style="left:17px;top:273px" width="6" height="9"><path d="M0.8 0.6 L5 4.4 L0.8 8.2Z" fill="#6a6a6a"/></svg>

<!-- folder: history -->
<svg style="left:34px;top:248px" width="20" height="17" viewBox="0 0 20 17">
 <path d="M1.2 15.6 V1.8 Q1.2 1 2 1 H6.4 L8 2.8 H17.6 Q18.6 2.8 18.6 3.8 V15.6Z" fill="#ececec" stroke="#3a3a3a" stroke-width="1.1" stroke-linejoin="round"/>
 <rect x="2.4" y="5.2" width="15.2" height="10" rx="1.6" fill="#fdfdfd" stroke="#3a3a3a" stroke-width="1"/>
 <circle cx="11" cy="10.2" r="3.6" fill="#fff" stroke="#333" stroke-width="1"/><path d="M11 8 V10.4 H13" fill="none" stroke="#333" stroke-width=".9"/>
 <path d="M3.4 9.8 L5.6 12.6 L7.8 9.8 H6.6 C6.8 8 8 7 9.4 6.8 C7 6 4.8 7.4 4.6 9.8Z" fill="#3f8dc0" stroke="#1f5a82" stroke-width=".5"/>
</svg>
<!-- folder: annotations -->
<svg style="left:34px;top:270px" width="20" height="17" viewBox="0 0 20 17">
 <path d="M1.2 15.6 V1.8 Q1.2 1 2 1 H6.4 L8 2.8 H17.6 Q18.6 2.8 18.6 3.8 V15.6Z" fill="#ececec" stroke="#3a3a3a" stroke-width="1.1" stroke-linejoin="round"/>
 <rect x="2.4" y="5.2" width="15.2" height="10" rx="1.6" fill="#fdfdfd" stroke="#3a3a3a" stroke-width="1"/>
 <text x="10" y="14.6" text-anchor="middle" font-family="Liberation Serif,serif" font-weight="bold" font-size="11.5" fill="#3b86b8" stroke="#3b86b8" stroke-width=".35">A</text>
</svg>
<!-- folder: sensors -->
<svg style="left:34px;top:292px" width="20" height="17" viewBox="0 0 20 17">
 <path d="M1.2 15.6 V1.8 Q1.2 1 2 1 H6.4 L8 2.8 H17.6 Q18.6 2.8 18.6 3.8 V15.6Z" fill="#ececec" stroke="#3a3a3a" stroke-width="1.1" stroke-linejoin="round"/>
 <rect x="2.4" y="5.2" width="15.2" height="10" rx="1.6" fill="#fdfdfd" stroke="#3a3a3a" stroke-width="1"/>
 <circle cx="9.6" cy="10.4" r="3.9" fill="#f4f4f4" stroke="#222" stroke-width="1.3"/>
 <path d="M9.6 10.4 L12.6 7.4" stroke="#3f8dc0" stroke-width="1.4"/><path d="M9.6 10.4 L12.8 12.6 L10.4 13.6Z" fill="#d8452a"/>
</svg>
<!-- material -->
<svg style="left:33px;top:312px" width="21" height="20" viewBox="0 0 21 20">
 <circle cx="3.6" cy="3.6" r="1.9" fill="#f2f2f2" stroke="#333" stroke-width=".9"/>
 <circle cx="3.6" cy="9.4" r="1.9" fill="#58a6d8" stroke="#1f5a82" stroke-width=".9"/>
 <circle cx="3.6" cy="15.2" r="1.9" fill="#f0c020" stroke="#8a6a08" stroke-width=".9"/>
 <path d="M7.6 3.6 H19 M7.6 9.4 H19 M7 15.2 H11.6" stroke="#1c1c1c" stroke-width="1.7"/>
 <path d="M15.60 10.90 L15.88 10.95 L16.14 11.11 L16.33 11.52 L16.47 11.94 L16.64 12.13 L16.82 12.24 L17.03 12.29 L17.29 12.28 L17.68 12.08 L18.11 11.93 L18.41 12.00 L18.64 12.16 L18.80 12.39 L18.87 12.69 L18.72 13.12 L18.52 13.51 L18.51 13.77 L18.56 13.98 L18.67 14.16 L18.86 14.33 L19.28 14.47 L19.69 14.66 L19.85 14.92 L19.90 15.20 L19.85 15.48 L19.69 15.74 L19.28 15.93 L18.86 16.07 L18.67 16.24 L18.56 16.42 L18.51 16.63 L18.52 16.89 L18.72 17.28 L18.87 17.71 L18.80 18.01 L18.64 18.24 L18.41 18.40 L18.11 18.47 L17.68 18.32 L17.29 18.12 L17.03 18.11 L16.82 18.16 L16.64 18.27 L16.47 18.46 L16.33 18.88 L16.14 19.29 L15.88 19.45 L15.60 19.50 L15.32 19.45 L15.06 19.29 L14.87 18.88 L14.73 18.46 L14.56 18.27 L14.38 18.16 L14.17 18.11 L13.91 18.12 L13.52 18.32 L13.09 18.47 L12.79 18.40 L12.56 18.24 L12.40 18.01 L12.33 17.71 L12.48 17.28 L12.68 16.89 L12.69 16.63 L12.64 16.42 L12.53 16.24 L12.34 16.07 L11.92 15.93 L11.51 15.74 L11.35 15.48 L11.30 15.20 L11.35 14.92 L11.51 14.66 L11.92 14.47 L12.34 14.33 L12.53 14.16 L12.64 13.98 L12.69 13.77 L12.68 13.51 L12.48 13.12 L12.33 12.69 L12.40 12.39 L12.56 12.16 L12.79 12.00 L13.09 11.93 L13.52 12.08 L13.91 12.28 L14.17 12.29 L14.38 12.24 L14.56 12.13 L14.73 11.94 L14.87 11.52 L15.06 11.11 L15.32 10.95Z" fill="#1c1c1c"/><circle cx="15.6" cy="15.2" r="1.1" fill="#f6f6f6"/>
</svg>
<!-- planes -->
<svg style="left:36px;top:334px" width="16" height="20" viewBox="0 0 16 20" fill="none" stroke="#2c2c2c"><path d="M1.8 5 L14.2 2.2 V15.4 L1.8 18.2Z" stroke-width="1.15"/><path d="M8.2 0.6 V3.4 M8.2 17 V19.6" stroke-width="1.15"/><path d="M8.2 4.6 V16" stroke-width="1.15" stroke-dasharray="2.4 1.5"/></svg>
<svg style="left:36px;top:356px" width="16" height="20" viewBox="0 0 16 20" fill="none" stroke="#2c2c2c"><path d="M1.8 5 L14.2 2.2 V15.4 L1.8 18.2Z" stroke-width="1.15"/><path d="M8.2 0.6 V3.4 M8.2 17 V19.6" stroke-width="1.15"/><path d="M8.2 4.6 V16" stroke-width="1.15" stroke-dasharray="2.4 1.5"/></svg>
<svg style="left:36px;top:378px" width="16" height="20" viewBox="0 0 16 20" fill="none" stroke="#2c2c2c"><path d="M1.8 5 L14.2 2.2 V15.4 L1.8 18.2Z" stroke-width="1.15"/><path d="M8.2 0.6 V3.4 M8.2 17 V19.6" stroke-width="1.15"/><path d="M8.2 4.6 V16" stroke-width="1.15" stroke-dasharray="2.4 1.5"/></svg>
<!-- origin -->
<svg style="left:34px;top:400px" width="20" height="18" viewBox="0 0 20 18"><path d="M3.8 3 V15.6 H16" fill="none" stroke="#111" stroke-width="1.7"/><path d="M3.8 0.6 L6.6 4.6 H1Z M19.4 15.6 L15.4 12.8 V18.4Z" fill="#111"/><rect x="2.4" y="14.2" width="2.8" height="2.8" fill="#111"/></svg>
<!-- selected sketch -->
<div class="abs" style="left:32px;top:421px;width:83px;height:22px;background:#aacbe6;border:1px solid #84b6df"></div>
<svg style="left:34px;top:422px" width="20" height="20" viewBox="0 0 20 20" fill="none"><path d="M15.6 2.2 H2.2 V11.6 Q2.2 16.8 7.2 17 L19.4 17.8" stroke="#2f4256" stroke-width="1.8"/><path d="M15.6 4 H4 V11.6 Q4 15.2 7.4 15.4 L19.2 16.1" stroke="#dcecf8" stroke-width="1.3"/></svg>
<!-- rollback bar -->
<div class="abs" style="left:9px;top:443px;width:239px;height:3px;background:#3f8cc5"></div>
<div class="t" style="left:58.8px;top:249.0px;font-size:11.3px;line-height:16px;display:inline-block;transform-origin:0 50%;transform:scaleX(1.0496)">History</div>
<div class="t" style="left:58.8px;top:271.0px;font-size:11.3px;line-height:16px;display:inline-block;transform-origin:0 50%;transform:scaleX(1.0746)">Примечания</div>
<div class="t" style="left:58.8px;top:293.0px;font-size:11.3px;line-height:16px;display:inline-block;transform-origin:0 50%;transform:scaleX(1.0895)">Датчики</div>
<div class="t" style="left:58.8px;top:315.0px;font-size:11.3px;line-height:16px;display:inline-block;transform-origin:0 50%;transform:scaleX(1.0541)">Материал &lt;не указан&gt;</div>
<div class="t" style="left:58.3px;top:337.0px;font-size:11.3px;line-height:16px;display:inline-block;transform-origin:0 50%;transform:scaleX(1.0179)">Спереди</div>
<div class="t" style="left:58.3px;top:359.0px;font-size:11.3px;line-height:16px;display:inline-block;transform-origin:0 50%;transform:scaleX(1.0296)">Сверху</div>
<div class="t" style="left:58.3px;top:381.0px;font-size:11.3px;line-height:16px;display:inline-block;transform-origin:0 50%;transform:scaleX(1.0179)">Справа</div>
<div class="t" style="left:58.3px;top:403.0px;font-size:11.3px;line-height:16px;display:inline-block;transform-origin:0 50%;transform:scaleX(1.0665)">Исходная точка</div>
<div class="t" style="left:58.3px;top:425.0px;font-size:11.3px;line-height:16px;display:inline-block;transform-origin:0 50%;transform:scaleX(1.0330)">(-) Эскиз1</div>
<div class="abs" style="left:10px;top:704px;width:238px;height:18px;background:#efefef"></div>
<div class="abs" style="left:26px;top:712px;width:113px;height:2px;background:#8c8c8c"></div>
<!-- panel right border + splitter handle -->
<div class="vl" style="left:250px;top:147px;height:579px;background:#86878d"></div>
<div class="abs" style="left:249px;top:147px;width:1px;height:579px;background:#ffffff"></div>
<!-- ===== VIEWPORT ===== -->
<div class="abs" style="left:251px;top:147px;width:765px;height:579px;background:#c4c8d4"></div>
<svg style="left:0;top:0" width="1024" height="768" viewBox="0 0 1024 768">
 <polygon points="499.3,424.6 565.4,310.4 697.9,310.4 764.0,424.6 697.9,539.6 565.4,539.6" fill="none" stroke="#58a3f0" stroke-width="2.4" stroke-linejoin="round"/>
 <circle cx="499.3" cy="424.6" r="2.6" fill="#58a3f0"/>
 <circle cx="565.4" cy="310.4" r="2.6" fill="#58a3f0"/>
 <circle cx="697.9" cy="310.4" r="2.6" fill="#58a3f0"/>
 <circle cx="764.0" cy="424.6" r="2.6" fill="#58a3f0"/>
 <circle cx="697.9" cy="539.6" r="2.6" fill="#58a3f0"/>
 <circle cx="565.4" cy="539.6" r="2.6" fill="#58a3f0"/>
 <circle cx="631.5" cy="425" r="114.6" fill="none" stroke="#58a3f0" stroke-width="1.1" stroke-dasharray="17 3.5 3.5 3.5"/>
 <path d="M631.5 421 V399" stroke="#0c0ccc" stroke-width="1"/><path d="M631.5 391.8 L633.9 400.4 H629.1Z" fill="#0c0ccc"/>
 <path d="M635 424.5 H640" stroke="#0c0ccc" stroke-width="1"/><path d="M648.2 424.5 L639.6 426.9 V422.1Z" fill="#0c0ccc"/>
 <path d="M628.7 421.7 L634.3 427.3 M634.3 421.7 L628.7 427.3 M627.8 424.5 H635.2 M631.5 420.8 V428.2" stroke="#2454e0" stroke-width=".8"/>
 <circle cx="631.5" cy="424.5" r="1" fill="#7ab8ff"/>
 <path d="M290.6 667.7 V646" stroke="#1b6b1b" stroke-width="4.2"/><path d="M290.6 667.7 V646" stroke="#58b058" stroke-width="1.6"/><path d="M290.6 637.6 L295 647.6 H286.2Z" fill="#176417"/>
 <path d="M290.6 667.7 H313" stroke="#c02020" stroke-width="4.2"/><path d="M290.6 667.7 H313" stroke="#f06a6a" stroke-width="1.6"/><path d="M321.4 667.7 L311.6 672 V663.4Z" fill="#b81818"/>
 <circle cx="290.6" cy="667.7" r="4.6" fill="#1010a8"/>
 <text x="291.2" y="635.4" text-anchor="middle" font-family="Liberation Serif,serif" font-size="12.5" fill="#1f8a1f">Y</text>
 <text x="325" y="672" text-anchor="middle" font-family="Liberation Serif,serif" font-size="12.5" fill="#d82828">X</text>
</svg>
<div class="t" style="left:263.2px;top:709.6px;font-family:'Liberation Serif',serif;font-weight:bold;font-size:12.6px;line-height:14px;color:#111;-webkit-text-stroke:0;display:inline-block;transform-origin:0 50%;transform:scaleX(0.9853)">*Спереди</div>
<!-- ===== HEADS-UP TOOLBAR ===== -->
<svg style="left:455px;top:150px" width="352" height="24" viewBox="455 150 352 24">
 <defs>
  <radialGradient id="gball" cx=".35" cy=".3" r=".8"><stop offset="0" stop-color="#fff" stop-opacity=".8"/><stop offset=".45" stop-color="#fff" stop-opacity="0"/><stop offset="1" stop-color="#000" stop-opacity=".25"/></radialGradient>
  <linearGradient id="gcube" x1="0" y1="0" x2="1" y2="1"><stop offset="0" stop-color="#8fc3e2"/><stop offset="1" stop-color="#3f88b6"/></linearGradient>
  <linearGradient id="gtel" x1="0" y1="0" x2="1" y2="1"><stop offset="0" stop-color="#f4f4f4"/><stop offset="1" stop-color="#8d9299"/></linearGradient>
 </defs>
 <!-- 1 zoom to fit -->
 <path d="M465.6 163 L458.6 170" stroke="#2f6f9c" stroke-width="3.4" stroke-linecap="round"/><path d="M465.6 163 L458.8 169.8" stroke="#62add8" stroke-width="1.8" stroke-linecap="round"/>
 <circle cx="469" cy="159" r="5.6" fill="#e6e9ee" stroke="#6e7782" stroke-width="1.3"/>
 <path d="M469 155.2 L470.4 157 H467.6Z M469 162.8 L470.4 161 H467.6Z M465.2 159 L467 157.6 V160.4Z M472.8 159 L471 157.6 V160.4Z" fill="#333"/>
 <!-- 2 zoom area -->
 <rect x="488.6" y="153.6" width="13" height="12" fill="none" stroke="#333" stroke-width="1" stroke-dasharray="2.6 1.8"/>
 <path d="M489.2 164.6 L482.8 170.4" stroke="#2f6f9c" stroke-width="3.4" stroke-linecap="round"/><path d="M489.2 164.6 L483 170.2" stroke="#62add8" stroke-width="1.8" stroke-linecap="round"/>
 <circle cx="492.8" cy="160.6" r="5.8" fill="#e9ecf0" fill-opacity=".92" stroke="#6e7782" stroke-width="1.3"/>
 <!-- 3 previous view -->
 <path d="M511 163.4 L521.4 155.8 L523.6 154.4 L526.4 157.8 L524.6 159.6 L515.6 169Z" fill="url(#gtel)" stroke="#6a6f78" stroke-width=".9" stroke-linejoin="round"/>
 <ellipse cx="513.2" cy="166.2" rx="2.4" ry="3.4" transform="rotate(-40 513.2 166.2)" fill="#fafafa" stroke="#70757d" stroke-width=".8"/>
 <path d="M518.4 166.4 L522.6 162.6 V165.2 H527.2 V167.6 H522.6 V170.2Z" fill="#2f76a6"/>
 <!-- 4 section view -->
 <path d="M535.4 158.6 C535.4 154.6 552.6 154.6 552.6 158.6 V167 L548 169.6 V161.6 C548 159.6 540.6 159.6 540.6 161.6 V170 L535.4 167.2Z" fill="#4a90bb" stroke="#1f4e6e" stroke-width="1" stroke-linejoin="round"/>
 <path d="M535.4 158.6 C535.4 154.6 552.6 154.6 552.6 158.6 C552.6 160 550.6 161 548 161.4 C547.4 159.6 541 159.6 540.6 161.6 C537.6 161 535.4 160 535.4 158.6Z" fill="#eef3f7" stroke="#1f4e6e" stroke-width=".8"/>
 <path d="M536.6 162 L539.6 164 M536.6 164.6 L539.6 166.6 M536.6 167 L539.6 169 M549 163.4 L551.6 161.6 M549 166 L551.6 164.2 M549 168.4 L551.6 166.8" stroke="#bfe0f4" stroke-width=".8"/>
 <!-- 5 dynamic annotation -->
 <path d="M563 159.8 L568.8 153.2 L568 157 L572 156.4 L565.4 163.2 L566.4 159.4Z" fill="#f2b21e" stroke="#b07a0a" stroke-width=".5"/>
 <path d="M561.4 164.8 L571.6 156.6 L574 155 L576.6 158 L575 159.6 L565.6 169.4Z" fill="url(#gtel)" stroke="#6a6f78" stroke-width=".9" stroke-linejoin="round"/>
 <ellipse cx="563.4" cy="167.2" rx="2.3" ry="3.2" transform="rotate(-40 563.4 167.2)" fill="#fafafa" stroke="#70757d" stroke-width=".8"/>
 <text x="574" y="171.4" text-anchor="middle" font-family="Liberation Serif,serif" font-size="11.5" fill="#2f76a6" stroke="#2f76a6" stroke-width=".3">A</text>
 <!-- 6 view orientation -->
 <path d="M587.4 158.4 L592.6 153.4 H604.4 V165.4 L599.4 170.4 H587.4Z" fill="#f4f6f8" stroke="#2c3a46" stroke-width="1" stroke-linejoin="round"/>
 <rect x="587.4" y="158.4" width="12" height="12" fill="url(#gcube)" stroke="#1f4e6e" stroke-width="1"/>
 <path d="M599.4 158.4 L604.4 153.4" stroke="#2c3a46" stroke-width=".9"/>
 <path d="M596 153.6 V157.4 M594.6 156 L596 157.6 L597.4 156 M604 162 H600.4 M601.8 160.6 L600.2 162 L601.8 163.4" fill="none" stroke="#222" stroke-width=".9"/>
 <path d="M613.4 160.6 H618.4 L615.9 163.6Z" fill="#8e95a3"/>
 <!-- 7 display style -->
 <path d="M628 156 L633.6 153 L644.6 154.4 V166 L638 169.4 L628 167.2Z" fill="#fbfcfd" stroke="#2c3a46" stroke-width="1" stroke-linejoin="round"/>
 <path d="M628 156 L637.6 157.6 L638 169.4 L628 167.2Z" fill="url(#gcube)" stroke="#1f4e6e" stroke-width=".9" stroke-linejoin="round"/>
 <path d="M628 156 L633.6 153 L644.6 154.4 L637.6 157.6Z" fill="#d6e9f5" stroke="#2c3a46" stroke-width=".8" stroke-linejoin="round"/>
 <path d="M653.4 160.6 H658.4 L655.9 163.6Z" fill="#8e95a3"/>
 <!-- 8 hide/show -->
 <path d="M667.4 162.4 C671 156.4 681.6 156.4 685.2 162.4 C681.6 168 671 168 667.4 162.4Z" fill="#eceef2" stroke="#8d939d" stroke-width="1.1"/>
 <circle cx="676.3" cy="162" r="4" fill="#8c9199"/><circle cx="676.3" cy="162" r="2" fill="#4a4e55"/>
 <path d="M676.3 155.2 V169.6" stroke="#33373d" stroke-width="1.3"/>
 <path d="M693.4 160.6 H698.4 L695.9 163.6Z" fill="#8e95a3"/>
 <!-- 9 edit appearance -->
 <clipPath id="cb2"><circle cx="714.3" cy="159.5" r="7.4"/></clipPath>
 <g clip-path="url(#cb2)"><rect x="706" y="151" width="17" height="17" fill="#e33a2a"/><path d="M706 151 H713.4 L714.6 160.4 L706 161Z" fill="#3f7fd2"/><path d="M706 161 L714.6 160.4 L716 168 H706Z" fill="#45b045"/><path d="M714.6 160.4 L722.6 157 V168 H716Z" fill="#f0c22a"/></g>
 <circle cx="714.3" cy="159.5" r="7.4" fill="url(#gball)" stroke="#5a6270" stroke-width=".5"/>
 <path d="M725.2 160 L727.8 162.4 L717.4 171.6 L713.4 172.6 L714.8 169Z" fill="#f0c43a" stroke="#5a4608" stroke-width=".9" stroke-linejoin="round"/><path d="M713.4 172.6 L714.2 170.4 L715.8 171.8Z" fill="#222"/><path d="M723.6 161.4 L726.2 163.8" stroke="#c0392b" stroke-width="1.6"/>
 <!-- 10 apply scene -->
 <rect x="732" y="165.4" width="20.6" height="6.4" fill="#fff" stroke="#111" stroke-width=".8"/>
 <path d="M732 165.4 h3.4 v3.2 h-3.4Z M738.8 165.4 h3.4 v3.2 h-3.4Z M745.8 165.4 h3.4 v3.2 h-3.4Z M735.4 168.6 h3.4 v3.2 h-3.4Z M742.2 168.6 h3.6 v3.2 h-3.6Z M749.2 168.6 h3.4 v3.2 h-3.4Z" fill="#111"/>
 <clipPath id="cb3"><circle cx="741.2" cy="159.5" r="7.4"/></clipPath>
 <g clip-path="url(#cb3)"><rect x="733" y="151" width="17" height="17" fill="#e33a2a"/><path d="M733 151 H740.4 L741.6 160.4 L733 161Z" fill="#3f7fd2"/><path d="M733 161 L741.6 160.4 L743 168 H733Z" fill="#45b045"/><path d="M741.6 160.4 L749.6 157 V168 H743Z" fill="#f0c22a"/></g>
 <circle cx="741.2" cy="159.5" r="7.4" fill="url(#gball)" stroke="#5a6270" stroke-width=".5"/>
 <path d="M759.4 160.6 H764.4 L761.9 163.6Z" fill="#8e95a3"/>
 <!-- 11 view settings -->
 <rect x="773.6" y="154.4" width="17" height="11.6" rx=".6" fill="#dfe2e7" stroke="#4a4f57" stroke-width="1.3"/>
 <path d="M782 166.4 V169 M778.4 169.6 H785.8" stroke="#30343a" stroke-width="1.6"/>
 <path d="M799.4 160.6 H804.4 L801.9 163.6Z" fill="#8e95a3"/>
</svg>

<!-- ===== TASK PANE TABS ===== -->
<div class="abs" style="left:990px;top:176px;width:26px;height:168px;background:#dcdcdc;border:1px solid #9ea2a9;border-right:none"></div>
<div class="abs" style="left:991px;top:177px;width:25px;height:22px;background:#f7f7f7"></div>
<div class="hl" style="left:990px;top:199px;width:26px;background:#9ea2a9"></div>
<div class="hl" style="left:990px;top:223px;width:26px;background:#9ea2a9"></div>
<div class="hl" style="left:990px;top:247px;width:26px;background:#9ea2a9"></div>
<div class="hl" style="left:990px;top:271px;width:26px;background:#9ea2a9"></div>
<div class="hl" style="left:990px;top:295px;width:26px;background:#9ea2a9"></div>
<div class="hl" style="left:990px;top:319px;width:26px;background:#9ea2a9"></div>
<svg style="left:990.6px;top:175.3px" width="25" height="169" viewBox="991 176 25 169">
 <defs><radialGradient id="g3dx" cx=".4" cy=".3" r=".8"><stop offset="0" stop-color="#5f9fc8"/><stop offset=".6" stop-color="#0f4f7c"/><stop offset="1" stop-color="#06304e"/></radialGradient></defs>
 <!-- 3dx compass -->
 <circle cx="1003.4" cy="188.8" r="9.6" fill="url(#g3dx)"/>
 <circle cx="1003.4" cy="188.8" r="5.4" fill="none" stroke="#9cc4de" stroke-width=".8" stroke-dasharray="5 3.4"/>
 <path d="M1001.8 186.2 L1006 188.8 L1001.8 191.4Z" fill="none" stroke="#e6f2fa" stroke-width=".9" stroke-linejoin="round"/>
 <!-- home -->
 <path d="M997.6 214 V221.4 H1009.4 V214 L1003.5 208.6Z" fill="#fdfdfd" stroke="#333" stroke-width="1.2" stroke-linejoin="round"/>
 <path d="M1001.6 221.4 V215.8 H1005.4 V221.4" fill="#eee" stroke="#333" stroke-width="1.1"/>
 <path d="M995.6 214 L1003.5 206.4 L1011.4 214" fill="none" stroke="#1d3f57" stroke-width="3" stroke-linecap="round"/>
 <path d="M995.9 213.8 L1003.5 206.6 L1011.1 213.8" fill="none" stroke="#3a82b3" stroke-width="1.5" stroke-linecap="round"/>
 <!-- design library (books) -->
 <g fill="#f6f6f6" stroke="#2e2e2e" stroke-width="1.1" stroke-linejoin="round">
  <path d="M997 232.2 L1000 230 L1002.6 231.6 V243 L999.6 245.2 L997 243.6Z"/>
  <path d="M1000.8 231 L1003.8 228.8 L1006.4 230.4 V241.8 L1003.4 244 L1000.8 242.4Z"/>
  <path d="M1004.6 229.8 L1007.6 227.6 L1010.2 229.2 V240.6 L1007.2 242.8 L1004.6 241.2Z"/>
 </g>
 <path d="M997 232.2 L999.6 233.8 L1002.6 231.6 M999.6 233.8 V245.2 M1000.8 231 L1003.4 232.6 L1006.4 230.4 M1003.4 232.6 V244 M1004.6 229.8 L1007.2 231.4 L1010.2 229.2 M1007.2 231.4 V242.8" fill="none" stroke="#2e2e2e" stroke-width=".9"/>
 <!-- file explorer folder -->
 <path d="M994.6 268.4 V253.6 H1000 L1001.6 255.6 H1010 V259" fill="#ededed" stroke="#333" stroke-width="1.2" stroke-linejoin="round"/>
 <path d="M994.6 268.4 L998.6 259 H1013 L1008.8 268.4Z" fill="#fafafa" stroke="#333" stroke-width="1.2" stroke-linejoin="round"/>
 <!-- view palette -->
 <rect x="995" y="276.6" width="17" height="16" rx="1" fill="#fafafa" stroke="#333" stroke-width="1.2"/>
 <rect x="997" y="279" width="6.4" height="3.2" fill="#f0c020" stroke="#6a5208" stroke-width=".7"/><rect x="1005.4" y="279" width="4.4" height="3.2" fill="#f0c020" stroke="#6a5208" stroke-width=".7"/>
 <path d="M999 284.6 H1001.6 V287.4 H1004 V290.4 H997 V287.4 H999Z" fill="#f0c020" stroke="#6a5208" stroke-width=".7"/>
 <rect x="1006" y="285" width="3.6" height="5.6" fill="#b8b8b8" stroke="#444" stroke-width=".7"/>
 <!-- appearances ball -->
 <clipPath id="cb4"><circle cx="1003.4" cy="308.4" r="8.2"/></clipPath>
 <g clip-path="url(#cb4)"><rect x="994" y="299" width="19" height="19" fill="#e33a2a"/><path d="M994 299 H1002.6 L1003.8 309.4 L994 310Z" fill="#3f7fd2"/><path d="M994 310 L1003.8 309.4 L1005.4 318 H994Z" fill="#45b045"/><path d="M1003.8 309.4 L1012.6 305.6 V318 H1005.4Z" fill="#f0c22a"/></g>
 <circle cx="1003.4" cy="308.4" r="8.2" fill="url(#gball)" stroke="#5a6270" stroke-width=".5"/>
 <!-- custom properties -->
 <rect x="995" y="324.6" width="17" height="16.6" rx="1.2" fill="#f6f6f6" stroke="#1f3e55" stroke-width="1.3"/>
 <rect x="995.6" y="325.2" width="15.8" height="2.8" fill="#4c9ccb"/>
 <g fill="#4a98c6" stroke="#1d5a82" stroke-width=".6"><rect x="997.4" y="330" width="3.2" height="2"/><rect x="997.4" y="333.6" width="3.2" height="2"/><rect x="997.4" y="337.2" width="3.2" height="2"/></g>
 <path d="M1002.4 331 H1009.6 M1002.4 334.6 H1009.6 M1002.4 338.2 H1009.6" stroke="#222" stroke-width="1"/>
</svg>
<!-- splitter handle (above viewport) -->
<div class="abs" style="left:248px;top:406px;width:11px;height:38px;background:#f6f6f6;border:1px solid #c2c6cf;border-left:none;border-radius:0 2px 2px 0"></div>
<div class="abs" style="left:251px;top:422px;width:6px;height:6px;border-radius:50%;background:#d0d0d0;border:1px solid #9a9a9a"></div>
<!-- ===== STATUS / BOTTOM TABS ===== -->
<div class="abs" style="left:8px;top:726px;width:1008px;height:36px;background:#f6f6f6"></div>
<div class="hl" style="left:8px;top:723px;width:241px;background:#c4c4c4"></div>
<div class="abs" style="left:8px;top:724px;width:241px;height:2px;background:#fbfbfb"></div>
<div class="hl" style="left:75px;top:726px;width:941px;background:#909090"></div>
<div class="hl" style="left:75px;top:726px;width:66px;background:#c6c6c6"></div>
<div class="abs" style="left:125px;top:723px;width:6px;height:2px;background:#b0b0b0"></div>
<div class="hl" style="left:8px;top:741px;width:1008px;background:#8c8c8c"></div>
<div class="abs" style="left:8px;top:726px;width:67px;height:15px;background:#b2b2b2;border-top:1px solid #2a2a2a;border-right:1px solid #8a8a8a"></div>
<div class="abs" style="left:10px;top:727px;width:16px;height:14px;border:1px solid #a6a6a6;border-left-color:#c8c8c8;border-top-color:#c8c8c8"></div>
<div class="abs" style="left:26px;top:727px;width:16px;height:14px;border:1px solid #a6a6a6;border-left-color:#c8c8c8;border-top-color:#c8c8c8"></div>
<div class="abs" style="left:42px;top:727px;width:16px;height:14px;border:1px solid #a6a6a6;border-left-color:#c8c8c8;border-top-color:#c8c8c8"></div>
<div class="abs" style="left:58px;top:727px;width:16px;height:14px;border:1px solid #a6a6a6;border-left-color:#c8c8c8;border-top-color:#c8c8c8"></div>
<svg style="left:10px;top:727px" width="64" height="14" viewBox="0 0 64 14" fill="#8c8c8c"><path d="M3.6 2.4 H5.2 V11.6 H3.6Z M11.6 2.4 V11.6 L5.6 7Z"/><path d="M27 2.4 V11.6 L21 7Z"/><path d="M37 2.4 V11.6 L43 7Z"/><path d="M52.4 2.4 V11.6 L58.4 7Z M58.8 2.4 H60.4 V11.6 H58.8Z"/></svg>
<div class="abs" style="left:142px;top:727px;width:218px;height:14px;background:#d9d9d9"></div>
<div class="vl" style="left:141px;top:727px;height:14px;background:#8e8e8e"></div>
<div class="vl" style="left:268px;top:727px;height:14px;background:#8e8e8e"></div>
<div class="vl" style="left:359px;top:727px;height:14px;background:#8e8e8e"></div>
<div class="t" style="left:87.5px;top:726px;font-size:11.3px;font-weight:bold;line-height:15px;display:inline-block;transform-origin:0 50%;transform:scaleX(1.0217)">Модель</div>
<div class="t" style="left:154.2px;top:726px;font-size:11.3px;line-height:15px;display:inline-block;transform-origin:0 50%;transform:scaleX(1.0747)">Трехмерные виды</div>
<div class="t" style="left:279.3px;top:726px;font-size:11.3px;line-height:15px;display:inline-block;transform-origin:0 50%;transform:scaleX(1.0316)">Анимация1</div>
<div class="t" style="left:9.6px;top:744.7px;font-size:11.3px;line-height:15px"><span style="display:inline-block;transform-origin:0 50%;transform:scaleX(0.9857)">SOLIDWORKS</span> <span style="position:absolute;left:80.4px;top:0;display:inline-block;transform-origin:0 50%;transform:scaleX(1.0457)">Premium 2024 SP5.0</span></div>
<div class="t" style="left:869.7px;top:744px;font-size:11.3px;line-height:15px;display:inline-block;transform-origin:0 50%;transform:scaleX(1.0391)">Настройка</div>
<svg style="left:945px;top:750px" width="7" height="4"><path d="M0.4 3.8 L3.3 0.2 L6.2 3.8Z" fill="#222"/></svg>
<svg style="left:780px;top:743px" width="17" height="16" viewBox="0 0 17 16">
 <path d="M0.8 9.2 L5.2 1.4 L9.6 9.2Z" fill="#f6c420" stroke="#5a4a0a" stroke-width=".9" stroke-linejoin="round"/><path d="M5.2 3.8 V6.6 M5.2 7.4 V8.3" stroke="#222" stroke-width="1.1"/>
 <path d="M7.6 11.4 C9.2 9 10.4 7 11.6 4.8 L9.4 4.8 L13.2 0.8 L15.8 5 L13.8 4.8 C12.8 7.4 11.4 9.6 9.6 12Z" fill="#222"/>
 <path d="M1.4 13.6 V15 M4 12.8 V15 M6.6 12 V15 M9.2 11 V15 M11.8 10 V15" stroke="#2f76a6" stroke-width="1.6"/>
</svg>
<svg style="left:977px;top:744px" width="18" height="16" viewBox="0 0 18 16">
 <path d="M1.2 5.6 L7 1 L16.8 5.4 L13.6 14.6 L2.6 10.4Z" fill="#efefef" stroke="#333" stroke-width="1.1" stroke-linejoin="round"/>
 <path d="M1.2 5.6 L12.4 10 L16.8 5.4 M12.4 10 L13.6 14.6" fill="none" stroke="#333" stroke-width=".9"/>
 <ellipse cx="8.6" cy="4.8" rx="2.6" ry="1.8" fill="#fff" stroke="#333" stroke-width="1"/><path d="M11 7.4 L13.4 6.2" stroke="#333" stroke-width="1.1"/>
</svg>
<div class="abs" style="left:1013px;top:750px;width:2px;height:2px;background:#bdbdbd"></div>
<div class="abs" style="left:1010px;top:753px;width:2px;height:2px;background:#bdbdbd"></div>
<div class="abs" style="left:1013px;top:753px;width:2px;height:2px;background:#bdbdbd"></div>
<div class="abs" style="left:1007px;top:756px;width:2px;height:2px;background:#bdbdbd"></div>
<div class="abs" style="left:1010px;top:756px;width:2px;height:2px;background:#bdbdbd"></div>
<div class="abs" style="left:1013px;top:756px;width:2px;height:2px;background:#bdbdbd"></div>
<div class="vl" style="left:1014px;top:727px;height:14px;background:#a0a0a0"></div>


</div></div>
<div id="rim"></div>
<div class="abs" style="left:1014px;top:43px;width:1px;height:104px;background:#fdfdfd"></div>
<div class="abs" style="left:1015px;top:42px;width:1px;height:105px;background:#7a828c"></div>
<!-- taskbar indicator -->
<div class="abs" style="left:516px;top:760px;width:37px;height:3px;border-radius:0 0 3px 3px;background:rgba(255,255,255,.13)"></div>
<div class="abs" style="left:527px;top:760px;width:16px;height:3px;border-radius:2px;background:#1460a8"></div>
</body>
</html>
